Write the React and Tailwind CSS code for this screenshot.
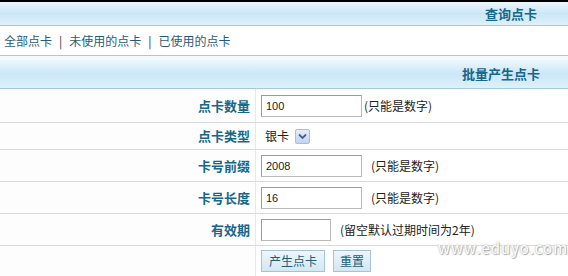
const LABEL = 'text-[13px] font-bold text-[#17678a]';
const NOTE = 'text-[12px] text-[#222]';
const INPUT =
  'h-[22px] border border-[#b9b9b9] border-t-[#9a9a9a] border-l-[#9a9a9a] bg-white px-[4px] text-[11px] text-[#222] outline-none';

function FormRow({ label, height, children }) {
  return (
    <div className="flex border-b border-[#dadada]" style={{ height }}>
      <div className="w-[256px] shrink-0 flex items-center justify-end pr-[5px] border-r border-[#e0eaef] bg-[#fdfdfd]">
        {label && <span className={LABEL}>{label}</span>}
      </div>
      <div className="flex-1 flex items-center pl-[5px] bg-white">{children}</div>
    </div>
  );
}

function HeaderBar({ title, className }) {
  return (
    <div
      className={`flex items-center justify-end bg-gradient-to-b from-[#ecf7fd] via-[#cbe7f7] to-[#dff0fa] border-b border-[#a3cbd9] ${className}`}
    >
      <span className="text-[13px] font-bold text-[#17678a]">{title}</span>
    </div>
  );
}

export default function App() {
  return (
    <div
      className="relative w-[568px] h-[276px] overflow-hidden bg-white border-t-2 border-black"
      style={{ fontFamily: '"Noto Sans CJK SC", "Liberation Sans", sans-serif' }}
    >
      <HeaderBar title="查询点卡" className="h-[24px] pr-[31px]" />

      <div className="h-[30px] flex items-center pl-[4px] border-b border-[#a3cbd9] text-[12px] text-[#1f5d78]">
        <span>全部点卡</span>
        <span className="mx-[7px] text-[#333]">|</span>
        <span>未使用的点卡</span>
        <span className="mx-[7px] text-[#333]">|</span>
        <span>已使用的点卡</span>
      </div>

      <div className="h-[4px] bg-[#f3f9fc]" />
      <HeaderBar title="批量产生点卡" className="h-[29px] pr-[28px]" />

      <FormRow label="点卡数量" height={34}>
        <input className={`${INPUT} w-[101px]`} defaultValue="100" style={{ fontFamily: '"Liberation Sans", sans-serif' }} />
        <span className={`${NOTE} ml-[2px]`}>(只能是数字)</span>
      </FormRow>

      <FormRow label="点卡类型" height={27}>
        <div className="flex items-center h-[18px] pl-[4px]">
          <span className="text-[12px] text-[#222] mr-[6px]">银卡</span>
          <span className="w-[15px] h-[15px] flex items-center justify-center rounded-[2px] border border-[#a9bde0] bg-gradient-to-b from-[#e6eefc] to-[#c3d3f3]">
            <svg width="9" height="7" viewBox="0 0 9 7">
              <path d="M1 1.5 L4.5 5 L8 1.5" fill="none" stroke="#4d6185" strokeWidth="1.8" />
            </svg>
          </span>
        </div>
      </FormRow>

      <FormRow label="卡号前缀" height={32}>
        <input className={`${INPUT} w-[101px]`} defaultValue="2008" style={{ fontFamily: '"Liberation Sans", sans-serif' }} />
        <span className={`${NOTE} ml-[9px]`}>(只能是数字)</span>
      </FormRow>

      <FormRow label="卡号长度" height={32}>
        <input className={`${INPUT} w-[101px]`} defaultValue="16" style={{ fontFamily: '"Liberation Sans", sans-serif' }} />
        <span className={`${NOTE} ml-[9px]`}>(只能是数字)</span>
      </FormRow>

      <FormRow label="有效期" height={32}>
        <input className={`${INPUT} w-[70px]`} defaultValue="" />
        <span className={`${NOTE} ml-[9px]`}>(留空默认过期时间为2年)</span>
      </FormRow>

      <FormRow label="" height={31}>
        <button className="h-[22px] w-[64px] border border-[#a6c3d0] bg-gradient-to-b from-[#edf6fb] to-[#d3e7f3] text-[12px] text-[#1f5d78]">
          产生点卡
        </button>
        <button className="ml-[8px] h-[22px] w-[38px] border border-[#a6c3d0] bg-gradient-to-b from-[#edf6fb] to-[#d3e7f3] text-[12px] text-[#1f5d78]">
          重置
        </button>
      </FormRow>

      <div
        className="absolute left-[438px] top-[235px] text-[15px] tracking-[1px] text-white"
        style={{ textShadow: '0 0 2px #9a9a9a, 1px 1px 1px #b0b0b0' }}
      >
        www.eduyo.com
      </div>
    </div>
  );
}
